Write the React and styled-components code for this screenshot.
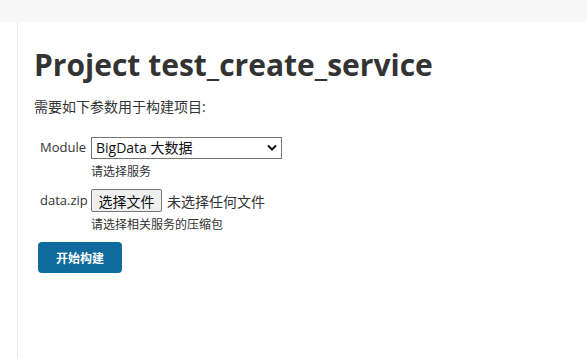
import React from 'react';
import styled, {createGlobalStyle} from 'styled-components';

const GlobalStyle = createGlobalStyle`
  html, body {
    margin: 0;
    padding: 0;
    background: #fff;
  }
  body {
    font-family: "Open Sans", "Noto Sans CJK SC", sans-serif;
    color: #333;
  }
`;

const Page = styled.div`
  width: 587px;
  height: 358px;
  display: flex;
  flex-direction: column;
  overflow: hidden;
`;

const TopBar = styled.div`
  height: 22px;
  flex: none;
  background: #f7f7f7;
`;

const Body = styled.div`
  flex: 1;
  display: flex;
`;

const SidePanel = styled.div`
  width: 17px;
  flex: none;
  border-right: 1px solid #e6e6e6;
`;

const Main = styled.main`
  flex: 1;
  padding: 25px 16px 0 16px;
`;

const Title = styled.h1`
  margin: 0;
  font-size: 30px;
  line-height: 36px;
  font-weight: 700;
  color: #333;
`;

const Intro = styled.p`
  margin: 14px 0 0;
  font-size: 14px;
  line-height: 20px;
`;

const Form = styled.form`
  margin-top: 19px;
  display: grid;
  grid-template-columns: 51px 1fr;
  padding-left: 6px;
`;

const Label = styled.label`
  font-size: 13px;
  line-height: 22px;
  color: #333;
`;

const Field = styled.div`
  display: flex;
  flex-direction: column;
  margin-bottom: ${p => p.$gap}px;
`;

const SelectWrap = styled.div`
  position: relative;
  width: 191px;
  height: 22px;
`;

const Select = styled.select`
  appearance: none;
  width: 100%;
  height: 100%;
  box-sizing: border-box;
  border: 1px solid #767676;
  border-radius: 0;
  background: #fff;
  padding: 0 0 0 4px;
  font: inherit;
  font-size: 14px;
  color: #111;
  outline: none;
`;

const Chevron = styled.svg`
  position: absolute;
  right: 5px;
  top: 8px;
  pointer-events: none;
`;

const FileRow = styled.div`
  display: flex;
  align-items: center;
  gap: 5px;
  height: 23px;
`;

const FileButton = styled.button`
  width: 71px;
  height: 23px;
  box-sizing: border-box;
  padding: 0;
  border: 1px solid #767676;
  border-radius: 2px;
  background: #efefef;
  font: inherit;
  font-size: 14px;
  color: #111;
`;

const FileName = styled.span`
  font-size: 14px;
  color: #333;
`;

const Help = styled.div`
  font-size: 12px;
  line-height: 16px;
  margin-top: ${p => p.$top}px;
  color: #333;
`;

const Submit = styled.button`
  display: block;
  margin-top: 9px;
  margin-left: 4px;
  width: 84px;
  height: 31px;
  border: none;
  border-radius: 4px;
  background: #0f6a9e;
  color: #fff;
  font: inherit;
  font-size: 12px;
  font-weight: 700;
`;

export default function App() {
  return (
    <Page>
      <GlobalStyle />
      <TopBar />
      <Body>
        <SidePanel />
        <Main>
          <Title>Project test_create_service</Title>
          <Intro>需要如下参数用于构建项目:</Intro>
          <Form onSubmit={e => e.preventDefault()}>
            <Label>Module</Label>
            <Field $gap={9}>
              <SelectWrap>
                <Select defaultValue="bigdata">
                  <option value="bigdata">BigData 大数据</option>
                </Select>
                <Chevron width="10" height="7" viewBox="0 0 10 7">
                  <path d="M1 1.5 L5 5.5 L9 1.5" fill="none" stroke="#111" strokeWidth="2" />
                </Chevron>
              </SelectWrap>
              <Help $top={6}>请选择服务</Help>
            </Field>
            <Label>data.zip</Label>
            <Field $gap={0}>
              <FileRow>
                <FileButton type="button">选择文件</FileButton>
                <FileName>未选择任何文件</FileName>
              </FileRow>
              <Help $top={5}>请选择相关服务的压缩包</Help>
            </Field>
          </Form>
          <Submit type="submit">开始构建</Submit>
        </Main>
      </Body>
    </Page>
  );
}
